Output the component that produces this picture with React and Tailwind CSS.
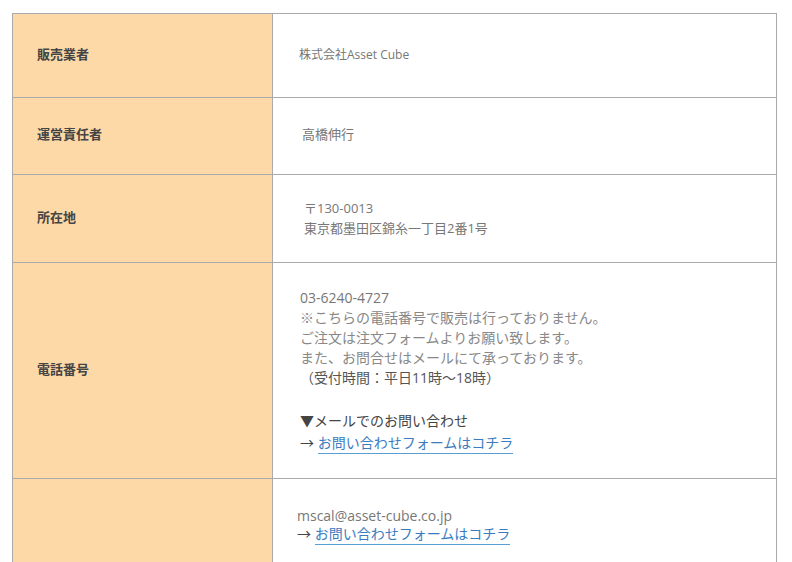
const font = { fontFamily: '"Open Sans", "Noto Sans CJK JP", sans-serif' };

function Label({ children }) {
  return (
    <th
      className="w-[260px] border border-[#aaaaaa] bg-[#fed9a8] pb-[4px] pl-[24px] text-left align-middle text-[13px] font-bold text-[#444444]"
      style={{ fontFamily: '"Noto Sans CJK JP", sans-serif' }}
    >
      {children}
    </th>
  );
}

function Cell({ className = "", children }) {
  return (
    <td className={`border border-[#aaaaaa] bg-white align-middle text-[#777777] ${className}`}>
      {children}
    </td>
  );
}

function FormLink({ lh = "leading-[20px]" }) {
  return (
    <div className={`text-[14px] text-[#444444] ${lh}`}>
      →{" "}
      <a className="border-b border-[#5a9fd4] pb-[1px] text-[#3b7cc0]" href="#">
        お問い合わせフォームはコチラ
      </a>
    </div>
  );
}

export default function App() {
  return (
    <div className="min-h-[562px] bg-white pl-[12px] pt-[13px]" style={font}>
      <table className="w-[765px] border-collapse">
        <tbody>
          <tr className="h-[84px]">
            <Label>販売業者</Label>
            <Cell className="pb-[2px] pl-[26px] text-[12px]">株式会社Asset Cube</Cell>
          </tr>
          <tr className="h-[77px]">
            <Label>運営責任者</Label>
            <Cell className="pb-[2px] pl-[29px] text-[13px] text-[#666666]">高橋伸行</Cell>
          </tr>
          <tr className="h-[88px]">
            <Label>所在地</Label>
            <Cell className="pb-[2px] pl-[31px] text-[13px] leading-[20px] text-[#666666]">
              <div>〒130-0013</div>
              <div>東京都墨田区錦糸一丁目2番1号</div>
            </Cell>
          </tr>
          <tr className="h-[216px]">
            <Label>電話番号</Label>
            <Cell className="pl-[27px] text-[14px] leading-[20px]">
              <div className="text-[#777777]">03-6240-4727</div>
              <div className="text-[#888888]">※こちらの電話番号で販売は行っておりません。</div>
              <div className="text-[#888888]">ご注文は注文フォームよりお願い致します。</div>
              <div className="text-[#888888]">また、お問合せはメールにて承っております。</div>
              <div className="text-[#555555]">（受付時間：平日11時～18時）</div>
              <div className="mt-[23px] text-[#444444]">▼メールでのお問い合わせ</div>
              <div className="mt-[2px]">
                <FormLink />
              </div>
            </Cell>
          </tr>
          <tr className="h-[88px]">
            <Label></Label>
            <Cell className="pl-[24px] pt-[4px] text-[14px] leading-[18px]">
              <div className="text-[#777777]">mscal@asset-cube.co.jp</div>
              <FormLink lh="leading-[18px]" />
            </Cell>
          </tr>
        </tbody>
      </table>
    </div>
  );
}
